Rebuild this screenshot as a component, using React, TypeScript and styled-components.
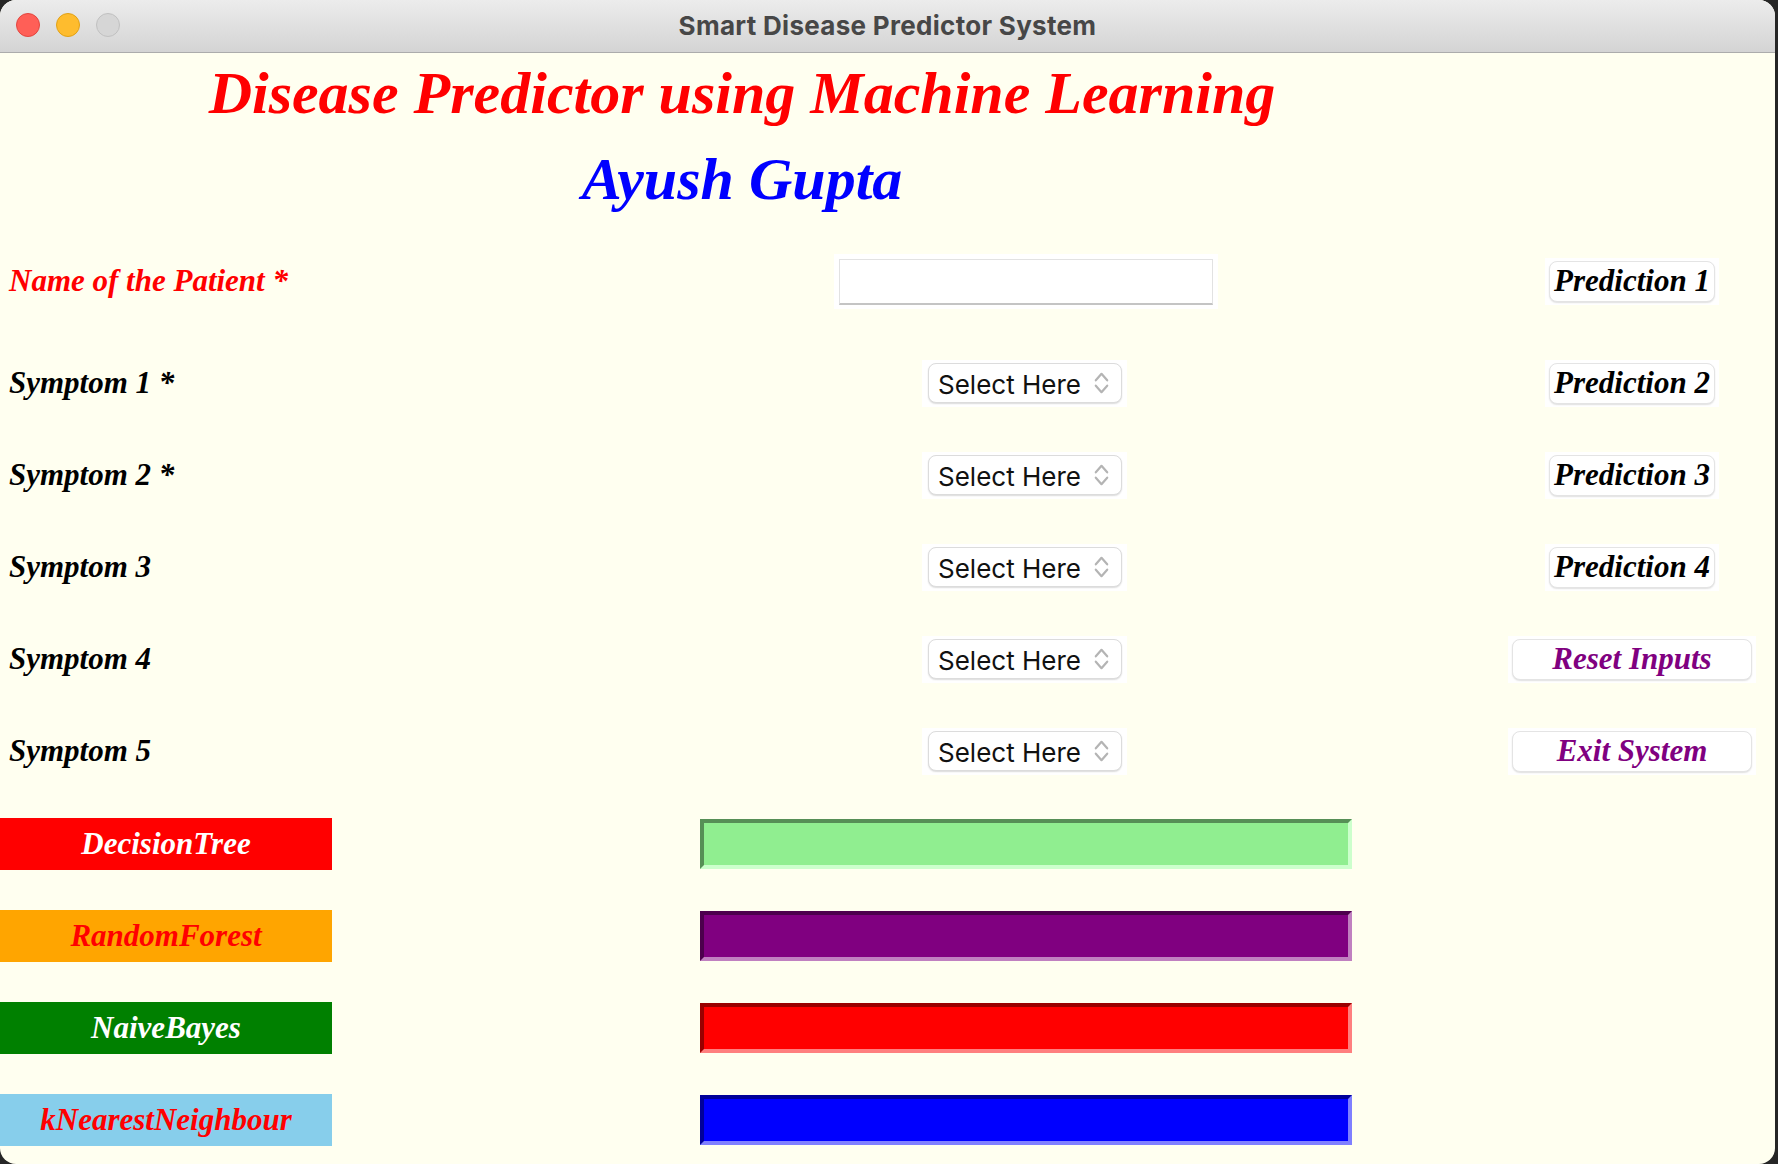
import React from "react";
import styled, { createGlobalStyle, css } from "styled-components";

const Global = createGlobalStyle`
  html, body { margin: 0; padding: 0; background: #262626; overflow: hidden; }
  #root { width: 1778px; height: 1164px; }
  * { box-sizing: border-box; }
`;

const Window = styled.div`
  width: 1775px;
  height: 1164px;
  border-radius: 16px;
  overflow: hidden;
  background: #fffff0;
  display: flex;
  flex-direction: column;
`;

const TitleBar = styled.header`
  flex: none;
  height: 53px;
  border-bottom: 1px solid #acacac;
  background: linear-gradient(#ececec, #d4d4d4);
  display: grid;
  grid-template-columns: 1fr auto 1fr;
  align-items: center;
`;

const Lights = styled.div`
  display: flex;
  gap: 16px;
  padding-left: 16px;
  margin-top: -2px;
`;

const Light = styled.span<{ $bg: string; $edge: string }>`
  width: 24px;
  height: 24px;
  border-radius: 50%;
  background: ${(p) => p.$bg};
  border: 1px solid ${(p) => p.$edge};
`;

const WindowTitle = styled.div`
  font: 700 26px "Inter", "Liberation Sans", sans-serif;
  letter-spacing: 0.3px;
  color: #474747;
  margin-top: -2px;
`;

const Content = styled.main`
  flex: 1;
  display: flex;
  flex-direction: column;
`;

const Heading = styled.h1<{ $color: string; $gap?: number }>`
  margin: ${(p) => p.$gap ?? 0}px 0 0;
  width: 1484px;
  text-align: center;
  font: italic 700 60px/80px "Liberation Serif", "Times New Roman", serif;
  color: ${(p) => p.$color};
`;

const columns = css`
  display: grid;
  grid-template-columns: 700px 652px 160px 240px;
  align-items: center;
`;

const Form = styled.section`
  ${columns};
  margin-top: 6px;
  grid-template-rows: 112px repeat(5, 92px);
`;

const Results = styled.section`
  ${columns};
  margin-top: 1px;
  grid-template-rows: repeat(4, 92px);
`;

const serif = `italic 700 31px "Liberation Serif", "Times New Roman", serif`;

const FieldLabel = styled.div<{ $color?: string }>`
  grid-column: 1;
  justify-self: start;
  padding-left: 9px;
  font: ${serif};
  color: ${(p) => p.$color ?? "#000"};
`;

const EntryFrame = styled.div`
  grid-column: 2;
  justify-self: center;
  background: #fff;
  padding: 5px 5px 4px;
`;

const Entry = styled.input`
  display: block;
  width: 374px;
  height: 46px;
  border: 1px solid #e2e2e2;
  border-bottom: 2px solid #c4c4c4;
  background: #fff;
  outline: none;
  padding: 0 6px;
  font: 400 26px "Inter", sans-serif;
`;

const SelectFrame = styled.div`
  grid-column: 2;
  justify-self: center;
  margin-right: 3px;
  background: #fff;
  padding: 3px 5px 4px 6px;
`;

const SelectButton = styled.button`
  width: 194px;
  height: 40px;
  border: 1px solid #dcdcdc;
  border-radius: 8px;
  box-shadow: 0 1px 1.5px rgba(0, 0, 0, 0.14);
  background: #fff;
  display: flex;
  align-items: center;
  justify-content: space-between;
  padding: 3px 12px 0 9px;
  font: 400 26px "Inter", "Liberation Sans", sans-serif;
  color: #111;
`;

const ActionFrame = styled.div`
  grid-column: 4;
  justify-self: center;
  background: #fff;
  padding: 3px 4px;
`;

const ActionButton = styled.button<{ $wide?: boolean; $color: string }>`
  display: flex;
  align-items: center;
  justify-content: center;
  width: ${(p) => (p.$wide ? 240 : 166)}px;
  height: 41px;
  padding: 0;
  border: 1px solid #e4e4e4;
  border-radius: 8px;
  box-shadow: 0 1px 1.5px rgba(0, 0, 0, 0.12);
  background: #fff;
  font: ${serif};
  color: ${(p) => p.$color};
`;

const AlgoLabel = styled.div<{ $bg: string; $fg: string }>`
  grid-column: 1;
  justify-self: start;
  width: 332px;
  height: 52px;
  display: flex;
  align-items: center;
  justify-content: center;
  background: ${(p) => p.$bg};
  color: ${(p) => p.$fg};
  font: ${serif};
`;

const ResultBar = styled.div<{ $bg: string; $dark: string; $light: string }>`
  grid-column: 2;
  height: 50px;
  background: ${(p) => p.$bg};
  border: 4px solid;
  border-color: ${(p) => `${p.$dark} ${p.$light} ${p.$light} ${p.$dark}`};
`;

const Chevrons = () => (
  <svg
    width="15"
    height="24"
    viewBox="0 0 15 24"
    fill="none"
    stroke="#b4b4b4"
    strokeWidth="2.2"
    strokeLinecap="round"
    strokeLinejoin="round"
    style={{ marginTop: -3 }}
  >
    <polyline points="1.8,9.3 7.5,2.8 13.2,9.3" />
    <polyline points="1.8,14.7 7.5,21.2 13.2,14.7" />
  </svg>
);

const symptoms = [
  { label: "Symptom 1 *", action: "Prediction 2" },
  { label: "Symptom 2 *", action: "Prediction 3" },
  { label: "Symptom 3", action: "Prediction 4" },
  { label: "Symptom 4", action: "Reset Inputs", wide: true },
  { label: "Symptom 5", action: "Exit System", wide: true },
];

const algorithms = [
  { name: "DecisionTree", bg: "#ff0000", fg: "#ffffff", bar: "#90ee90", dark: "#568f56", light: "#ccffcc" },
  { name: "RandomForest", bg: "#ffa500", fg: "#ff0000", bar: "#800080", dark: "#4d004d", light: "#c080c0" },
  { name: "NaiveBayes", bg: "#008000", fg: "#ffffff", bar: "#ff0000", dark: "#990000", light: "#ff7f7f" },
  { name: "kNearestNeighbour", bg: "#87ceeb", fg: "#ff0000", bar: "#0000ff", dark: "#000099", light: "#7f7fff" },
];

export default function App() {
  return (
    <>
      <Global />
      <Window>
        <TitleBar>
          <Lights>
            <Light $bg="#ff5f57" $edge="#e2463f" />
            <Light $bg="#febc2e" $edge="#e1a116" />
            <Light $bg="#d6d6d6" $edge="#c0c0c0" />
          </Lights>
          <WindowTitle>Smart Disease Predictor System</WindowTitle>
          <span />
        </TitleBar>
        <Content>
          <Heading $color="#ff0000">Disease Predictor using Machine Learning</Heading>
          <Heading $color="#0000ff" $gap={6}>
            Ayush Gupta
          </Heading>
          <Form>
            <FieldLabel $color="#ff0000">Name of the Patient *</FieldLabel>
            <EntryFrame>
              <Entry type="text" />
            </EntryFrame>
            <ActionFrame>
              <ActionButton $color="#000">Prediction 1</ActionButton>
            </ActionFrame>
            {symptoms.map((s) => (
              <React.Fragment key={s.label}>
                <FieldLabel>{s.label}</FieldLabel>
                <SelectFrame>
                  <SelectButton>
                    <span>Select Here</span>
                    <Chevrons />
                  </SelectButton>
                </SelectFrame>
                <ActionFrame>
                  <ActionButton $wide={s.wide} $color={s.wide ? "#800080" : "#000"}>
                    {s.action}
                  </ActionButton>
                </ActionFrame>
              </React.Fragment>
            ))}
          </Form>
          <Results>
            {algorithms.map((a) => (
              <React.Fragment key={a.name}>
                <AlgoLabel $bg={a.bg} $fg={a.fg}>
                  {a.name}
                </AlgoLabel>
                <ResultBar $bg={a.bar} $dark={a.dark} $light={a.light} />
              </React.Fragment>
            ))}
          </Results>
        </Content>
      </Window>
    </>
  );
}
